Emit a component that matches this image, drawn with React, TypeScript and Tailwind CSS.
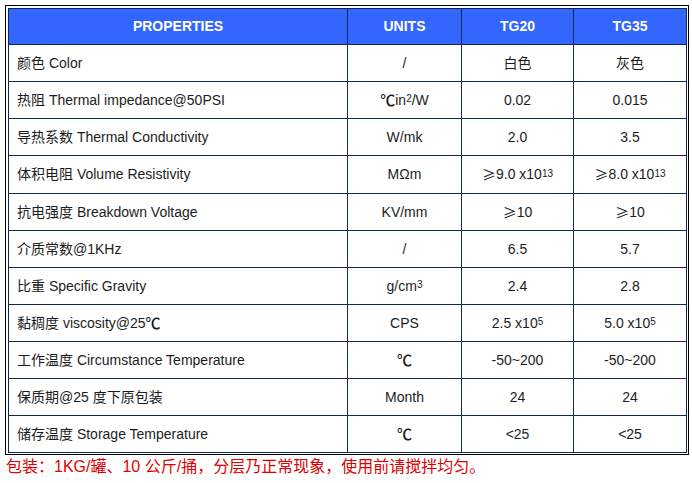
import React from "react";

const CJK = '"Liberation Sans", Arial, "Noto Sans CJK SC", sans-serif';

type Row = { p: React.ReactNode; u: React.ReactNode; a: React.ReactNode; b: React.ReactNode; h?: string };

const C = () => (
  <span className="text-[15px] font-medium" style={{ fontFamily: '"Noto Sans CJK SC", sans-serif' }}>
    ℃
  </span>
);
const Sup = ({ children }: { children: React.ReactNode }) => (
  <sup className="text-[10px] relative top-[-1px] align-super leading-none">{children}</sup>
);
const GE = () => <span style={{ fontFamily: '"Noto Sans CJK SC", sans-serif' }}>≥</span>;

const rows: Row[] = [
  { p: "颜色 Color", u: "/", a: "白色", b: "灰色" },
  { p: "热阻 Thermal impedance@50PSI", u: <><C />in<Sup>2</Sup>/W</>, a: "0.02", b: "0.015" },
  { p: "导热系数 Thermal Conductivity", u: "W/mk", a: "2.0", b: "3.5" },
  { p: "体积电阻 Volume Resistivity", u: "MΩm", a: <><GE />9.0 x10<Sup>13</Sup></>, b: <><GE />8.0 x10<Sup>13</Sup></>, h: "h-[38px]" },
  { p: "抗电强度 Breakdown Voltage", u: "KV/mm", a: <><GE />10</>, b: <><GE />10</> },
  { p: "介质常数@1KHz", u: "/", a: "6.5", b: "5.7" },
  { p: "比重 Specific Gravity", u: <>g/cm<Sup>3</Sup></>, a: "2.4", b: "2.8" },
  { p: <>黏稠度 viscosity@25<C /></>, u: "CPS", a: <>2.5 x10<Sup>5</Sup></>, b: <>5.0 x10<Sup>5</Sup></> },
  { p: "工作温度 Circumstance Temperature", u: <C />, a: "-50~200", b: "-50~200" },
  { p: "保质期@25 度下原包装", u: "Month", a: "24", b: "24" },
  { p: "储存温度 Storage Temperature", u: <C />, a: "<25", b: "<25" },
];

export default function App() {
  const cell = "border-r border-b border-[#102a4c] flex items-center";
  return (
    <div className="w-[692px] h-[483px] bg-white pl-[5px] pt-[5px]" style={{ fontFamily: CJK }}>
      <div className="w-[684px] border border-black pt-[2px] pl-[2px] pr-px pb-px">
        <div className="grid grid-cols-[339px_114px_112px_113px] border-l border-t border-[#102a4c] text-[14px] text-[#1c1c1c]">
          {["PROPERTIES", "UNITS", "TG20", "TG35"].map((t) => (
            <div key={t} className={`${cell} h-[36px] justify-center bg-[#3366ff] text-white font-bold`}>
              {t}
            </div>
          ))}
          {rows.map((r, i) => (
            <React.Fragment key={i}>
              <div className={`${cell} ${r.h ?? "h-[37px]"} pl-[8px]`}>{r.p}</div>
              <div className={`${cell} ${r.h ?? "h-[37px]"} justify-center`}>{r.u}</div>
              <div className={`${cell} ${r.h ?? "h-[37px]"} justify-center`}>{r.a}</div>
              <div className={`${cell} ${r.h ?? "h-[37px]"} justify-center`}>{r.b}</div>
            </React.Fragment>
          ))}
        </div>
      </div>
      <div className="text-[16px] leading-[24px] text-[#e00000] pl-px">
        包装：1KG/罐、10 公斤/捅，分层乃正常现象，使用前请搅拌均匀。
      </div>
    </div>
  );
}
